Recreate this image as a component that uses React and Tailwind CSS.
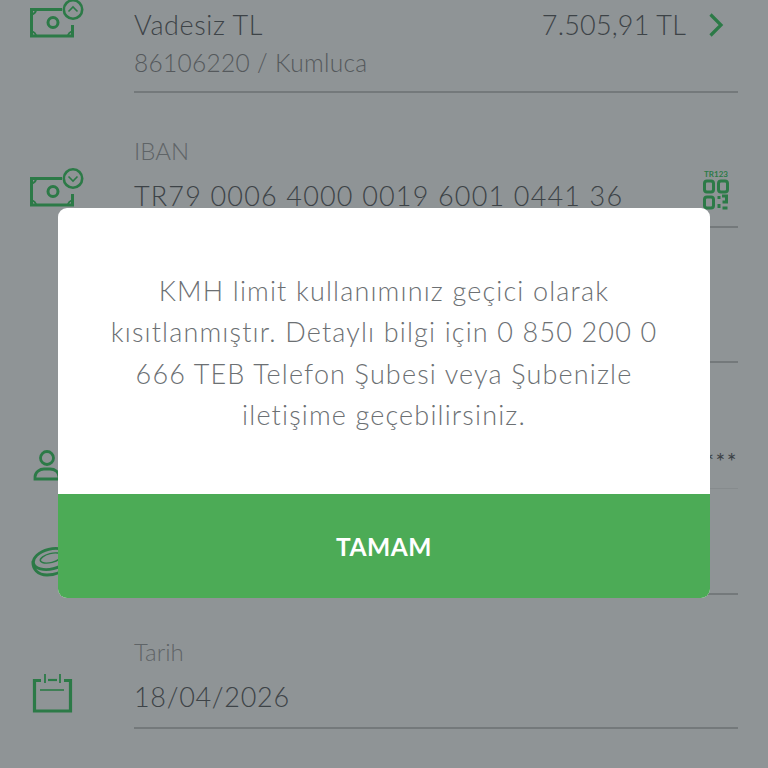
const GREEN = "#2c7a47";

function MoneyIcon({ up }) {
  return (
    <svg width="56" height="44" viewBox="0 0 56 44" fill="none" stroke={GREEN}>
      <path d="M33 10.500H2.500V37H43.500V26" strokeWidth="3" />
      <circle cx="24" cy="23.500" r="5" strokeWidth="3" />
      <path d="M2 15.500a5 5 0 0 0 5-5M2 32.500a5 5 0 0 1 5 5M44 32.500a5 5 0 0 0-5 5" strokeWidth="2" />
      <circle cx="44" cy="10.500" r="9.200" strokeWidth="2.600" />
      <path d={up ? "M39.500 12.500L44 8l4.500 4.500" : "M39.500 8.500L44 13l4.500-4.500"} strokeWidth="1.600" />
    </svg>
  );
}

function QrIcon() {
  return (
    <div className="flex w-[28px] flex-col items-center">
      <span className="text-[8px] leading-[9px] font-bold text-[#2c7a47]">TR123</span>
      <svg width="26" height="31" viewBox="0 0 26 31" fill="none" stroke={GREEN} strokeWidth="3">
        <rect x="1.500" y="2" width="9" height="11" rx="2.500" />
        <rect x="15.500" y="2" width="9" height="11" rx="2.500" />
        <rect x="1.500" y="18" width="9" height="11" rx="2.500" />
        <path d="M16 17v3M16 25v4M24.500 29h-5M19 17h4.500v6h-4" />
      </svg>
    </div>
  );
}

function UserIcon() {
  return (
    <svg width="32" height="34" viewBox="0 0 32 34" fill="none" stroke={GREEN} strokeWidth="2.800">
      <circle cx="14" cy="9" r="6.500" />
      <path d="M2 30v-2c0-5 5-8 9-8h6c5 0 9 3 9 8v2z" />
    </svg>
  );
}

function CoinIcon() {
  return (
    <svg width="40" height="34" viewBox="0 0 40 34" fill="none" stroke={GREEN} strokeWidth="2.800">
      <ellipse cx="20" cy="14" rx="18" ry="10" transform="rotate(-14 20 14)" />
      <path d="M2 16c-1 8 5 14 14 14 6 0 14-2 20-8" />
      <ellipse cx="20" cy="13" rx="11" ry="4.500" transform="rotate(-14 20 13)" strokeWidth="1.500" />
    </svg>
  );
}

function CalendarIcon() {
  return (
    <svg width="42" height="42" viewBox="0 0 42 42" fill="none" stroke={GREEN}>
      <path d="M9 8.500H2.500V39H38.500V8.500H32" strokeWidth="3.200" />
      <path d="M16 8h9" strokeWidth="2.200" />
      <path d="M13 2v9M28 2v9" strokeWidth="1.800" />
      <path d="M8 18h24" strokeWidth="1.600" />
    </svg>
  );
}

function Chevron() {
  return (
    <svg width="16" height="24" viewBox="0 0 16 24" fill="none" stroke={GREEN} strokeWidth="3.200">
      <path d="M2.500 1.500L13 12L2.500 22.500" />
    </svg>
  );
}

export default function App() {
  return (
    <div
      className="relative h-[768px] w-[768px] overflow-hidden bg-[#8f9496] text-[#3d4347]"
      style={{ fontFamily: '"Lato", "Noto Sans", sans-serif' }}
    >
      {/* Account */}
      <div className="absolute left-[29px] top-[-1px]"><MoneyIcon up /></div>
      <div className="ml-[134px] mr-[30px] h-[93px] border-b-2 border-[#74797b] pt-[7px]">
        <div className="flex items-center justify-between pr-[14px]">
          <span className="text-[27px] leading-[36px] font-light tracking-[0.6px]">Vadesiz TL</span>
          <div className="flex items-center gap-[22px]">
            <span className="text-[27px] leading-[36px] font-light tracking-[0.2px]">7.505,91 TL</span>
            <Chevron />
          </div>
        </div>
        <p className="mt-[3px] text-[24.500px] leading-[34px] font-light tracking-[0.3px] text-[#55595c]">86106220 / Kumluca</p>
      </div>

      {/* IBAN */}
      <div className="absolute left-[29px] top-[168px]"><MoneyIcon /></div>
      <div className="ml-[134px] mr-[30px] mt-[41px] h-[94px] border-b-2 border-[#74797b]">
        <p className="text-[24px] leading-[34px] font-light text-[#5f6467]">IBAN</p>
        <div className="mt-[9px] flex items-start justify-between">
          <span className="text-[27px] leading-[38px] font-light tracking-[1.170px]">TR79 0006 4000 0019 6001 0441 36</span>
          <div className="mr-[8px] mt-[-7px]"><QrIcon /></div>
        </div>
      </div>

      {/* hidden behind dialog */}
      <div className="ml-[134px] mr-[30px] h-[135px] border-b-2 border-[#74797b]" />

      {/* Masked number */}
      <div className="absolute left-[33px] top-[449px]"><UserIcon /></div>
      <div className="ml-[134px] mr-[30px] flex h-[126px] items-end justify-end border-b border-[#868b8d] pb-[17px]">
        <span className="text-[23px] leading-[20px] tracking-[1.500px]">***</span>
      </div>

      {/* Coin */}
      <div className="absolute left-[31px] top-[545px]"><CoinIcon /></div>
      <div className="ml-[134px] mr-[30px] h-[106px] border-b-2 border-[#74797b]" />

      {/* Tarih */}
      <div className="absolute left-[32px] top-[672px]"><CalendarIcon /></div>
      <div className="ml-[134px] mr-[30px] mt-[40px] h-[94px] border-b-2 border-[#74797b]">
        <p className="text-[24px] leading-[34px] font-light text-[#5f6467]">Tarih</p>
        <p className="mt-[9px] text-[27px] leading-[38px] font-light tracking-[0.7px]">18/04/2026</p>
      </div>

      {/* Dialog */}
      <div className="absolute left-[58px] top-[208px] w-[652px] overflow-hidden rounded-[9px] bg-white">
        <div className="flex h-[286px] items-center justify-center pt-[3px] text-center">
          <p className="text-[27px] leading-[41.500px] font-light tracking-[1.150px] whitespace-nowrap text-[#6c7073]">
            KMH limit kullanımınız geçici olarak
            <br />
            kısıtlanmıştır. Detaylı bilgi için 0 850 200 0
            <br />
            666 TEB Telefon Şubesi veya Şubenizle
            <br />
            iletişime geçebilirsiniz.
          </p>
        </div>
        <div className="flex h-[104px] items-center justify-center bg-[#4cab56] pt-[2px] text-[24.500px] font-bold tracking-[0.5px] text-white">
          TAMAM
        </div>
      </div>
    </div>
  );
}
